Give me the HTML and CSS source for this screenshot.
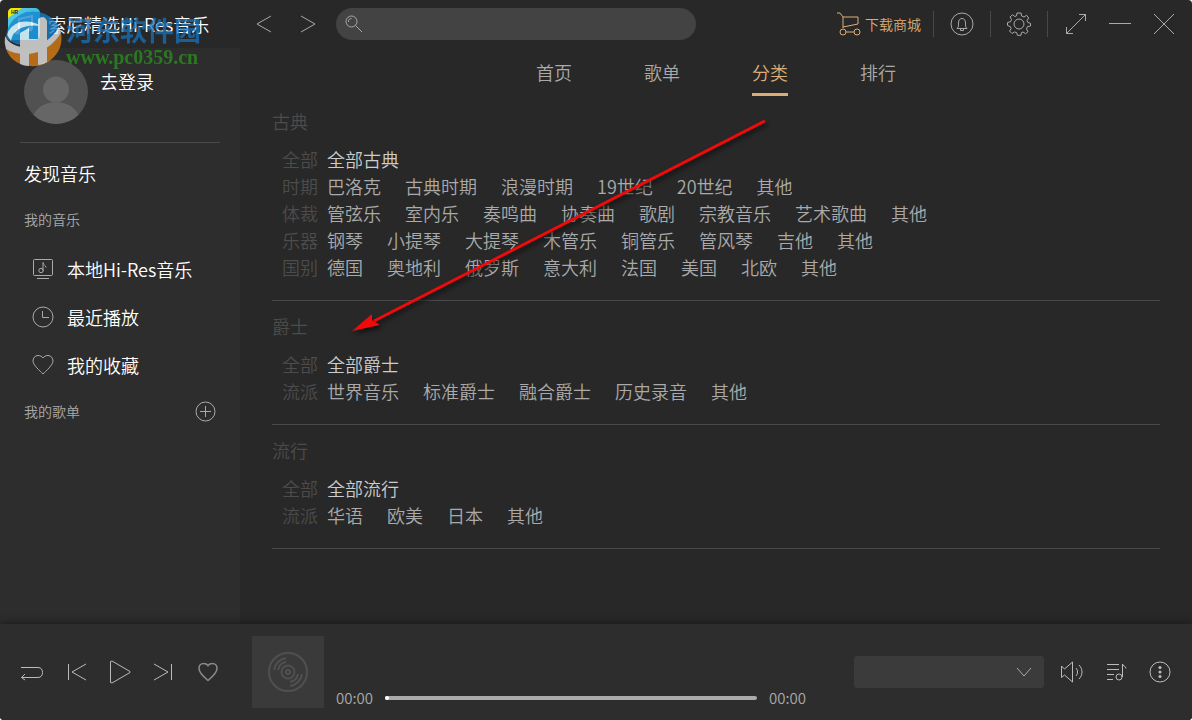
FILE: index.html
```html
<!DOCTYPE html>
<html lang="zh-CN">
<head>
    <meta charset="UTF-8">
    <meta name="viewport" content="width=device-width, initial-scale=1.0">
    <title>索尼精选Hi-Res音乐</title>
    <link rel="stylesheet" href="styles.css">
</head>
<body>
<div class="app">
    <header class="topbar">
        <div class="brand">
            <svg class="brand-logo" viewBox="0 0 32 32">
                <defs>
                    <linearGradient id="logoBg" x1="0" y1="0" x2="1" y2="1">
                        <stop offset="0" stop-color="#5fd0e6"/>
                        <stop offset="1" stop-color="#22a8d8"/>
                    </linearGradient>
                </defs>
                <rect width="32" height="32" rx="5" fill="url(#logoBg)"/>
                <path d="M5 0H14L0 10V5Q0 0 5 0Z" fill="#f7e600"/>
                <path d="M11 24V11L24 8V21" fill="none" stroke="#fff" stroke-width="2"/>
                <circle cx="9" cy="24" r="2.5" fill="#fff"/>
                <circle cx="22" cy="21" r="2.5" fill="#fff"/>
                <text x="3" y="6" class="logo-tag">HR</text>
            </svg>
            <span>索尼精选Hi-Res音乐</span>
        </div>
        <div class="history">
            <button aria-label="后退"><svg viewBox="0 0 20 20"><path d="M17 2L3 10L17 18"/></svg></button>
            <button aria-label="前进"><svg viewBox="0 0 20 20"><path d="M3 2L17 10L3 18"/></svg></button>
        </div>
        <label class="search">
            <svg viewBox="0 0 20 20"><circle cx="7.500" cy="7.500" r="5.500"/><path d="M4.500 8A3 3 0 0 1 7.500 4.500M11.500 11.500L18 18"/></svg>
            <input type="text" aria-label="搜索">
        </label>
        <div class="tools">
            <a href="#" class="store">
                <svg viewBox="0 0 24 24"><path d="M0 1H3L6 5V16M6 5H21V12L6 15M9 20H17"/><circle cx="6" cy="20" r="3"/><circle cx="20" cy="20" r="3"/></svg>
                下载商城
            </a>
            <button class="tool" aria-label="消息"><svg viewBox="0 0 24 24"><circle cx="12" cy="12" r="11"/><path d="M7 16.500H17C15.500 15 15.500 14 15.500 11C15.500 8 14 6.500 12 6.500S8.500 8 8.500 11C8.500 14 8.500 15 7 16.500ZM10.500 17V18.500H13.500V17"/></svg></button>
            <button class="tool" aria-label="设置"><svg viewBox="0 0 24 24"><circle cx="12" cy="12" r="5"/><path d="M10 1H14L14.600 4L17 5L19.600 3.300L21.700 6L20 8.500L20.800 10.500L23.500 11.300V14L20.500 14.600L19.500 17L21 19.600L18.500 21.700L16 20L14.500 20.500L14 23.300H10.500L9.500 20.500L7.500 20L5 21.500L2.500 19L4.200 16.500L3.300 14.500L.5 13.500V10.500L3.500 9.700L4.500 7.500L3 5L5.500 2.700L7.800 4.500L9.500 3.800Z"/></svg></button>
            <button class="tool" aria-label="全屏"><svg viewBox="0 0 24 24"><path d="M2 22L22 2M15 2.500H21.500V9M2.500 15V21.500H9"/></svg></button>
            <button class="window-button" aria-label="最小化"><svg viewBox="0 0 24 24"><path d="M1 11.500H23"/></svg></button>
            <button class="window-button" aria-label="关闭"><svg viewBox="0 0 24 24"><path d="M2 2L22 22M22 2L2 22"/></svg></button>
        </div>
    </header>

    <aside class="sidebar">
        <a href="#" class="profile">
            <svg viewBox="0 0 64 64">
                <clipPath id="avatarClip"><circle cx="32" cy="32" r="32"/></clipPath>
                <g clip-path="url(#avatarClip)">
                    <rect width="64" height="64" fill="#515151"/>
                    <circle cx="32" cy="29.500" r="13" fill="#666"/>
                    <ellipse cx="32" cy="62" rx="24" ry="20" fill="#666"/>
                </g>
            </svg>
            <span>去登录</span>
        </a>
        <a href="#" class="discover">发现音乐</a>
        <h2 class="group-title">我的音乐</h2>
        <nav class="library">
            <a href="#"><svg viewBox="0 0 22 22"><rect x="1.500" y="1.500" width="19" height="16" rx="1"/><path d="M5 20.500H17M11 13V4.500C11 7 14 7 14 9.500"/><circle cx="9" cy="12.500" r="2.200"/></svg>本地Hi-Res音乐</a>
            <a href="#"><svg viewBox="0 0 22 22"><circle cx="11" cy="11" r="10"/><path d="M10.500 5V11.500H17"/></svg>最近播放</a>
            <a href="#"><svg viewBox="0 0 22 22"><path d="M11 20C8 17 1 11 1 7C1 4 3 1.500 6 1.500C8.500 1.500 10 2.500 11 4C12 2.500 13.500 1.500 16 1.500C19 1.500 21 4 21 7C21 11 14 17 11 20Z"/></svg>我的收藏</a>
        </nav>
        <h2 class="group-title">我的歌单
            <button aria-label="新建歌单"><svg viewBox="0 0 21 21"><circle cx="10.500" cy="10.500" r="9.500"/><path d="M10.500 5V16M5 10.500H16"/></svg></button>
        </h2>
    </aside>

    <main class="content">
        <nav class="tabs">
            <a href="#">首页</a>
            <a href="#">歌单</a>
            <a href="#" class="active">分类</a>
            <a href="#">排行</a>
        </nav>

        <section class="genre">
            <h3>古典</h3>
            <dl>
                <dt>全部</dt>
                <dd class="all"><a href="#">全部古典</a></dd>
                <dt>时期</dt>
                <dd><a href="#">巴洛克</a><a href="#">古典时期</a><a href="#">浪漫时期</a><a href="#">19世纪</a><a href="#">20世纪</a><a href="#">其他</a></dd>
                <dt>体裁</dt>
                <dd><a href="#">管弦乐</a><a href="#">室内乐</a><a href="#">奏鸣曲</a><a href="#">协奏曲</a><a href="#">歌剧</a><a href="#">宗教音乐</a><a href="#">艺术歌曲</a><a href="#">其他</a></dd>
                <dt>乐器</dt>
                <dd><a href="#">钢琴</a><a href="#">小提琴</a><a href="#">大提琴</a><a href="#">木管乐</a><a href="#">铜管乐</a><a href="#">管风琴</a><a href="#">吉他</a><a href="#">其他</a></dd>
                <dt>国别</dt>
                <dd><a href="#">德国</a><a href="#">奥地利</a><a href="#">俄罗斯</a><a href="#">意大利</a><a href="#">法国</a><a href="#">美国</a><a href="#">北欧</a><a href="#">其他</a></dd>
            </dl>
        </section>

        <section class="genre">
            <h3>爵士</h3>
            <dl>
                <dt>全部</dt>
                <dd class="all"><a href="#">全部爵士</a></dd>
                <dt>流派</dt>
                <dd><a href="#">世界音乐</a><a href="#">标准爵士</a><a href="#">融合爵士</a><a href="#">历史录音</a><a href="#">其他</a></dd>
            </dl>
        </section>

        <section class="genre">
            <h3>流行</h3>
            <dl>
                <dt>全部</dt>
                <dd class="all"><a href="#">全部流行</a></dd>
                <dt>流派</dt>
                <dd><a href="#">华语</a><a href="#">欧美</a><a href="#">日本</a><a href="#">其他</a></dd>
            </dl>
        </section>
    </main>

    <footer class="player">
        <div class="controls">
            <button aria-label="循环播放"><svg viewBox="0 0 24 24"><path d="M1 7.500H18C21 7.500 22.500 9.500 22.500 12.500S21 17.500 18 17.500H1.500M5 14L1.500 17.500L5 20"/></svg></button>
            <button aria-label="上一首"><svg viewBox="0 0 24 24"><path d="M4.500 4V20M22 4L8 12L22 20"/></svg></button>
            <button aria-label="播放"><svg viewBox="0 0 24 24"><path d="M2.500 1.500L4 1L22 11.500V12.500L4 23L2.500 22.500Z"/></svg></button>
            <button aria-label="下一首"><svg viewBox="0 0 24 24"><path d="M19.500 4V20M2 4L16 12L2 20"/></svg></button>
            <button class="like" aria-label="喜欢"><svg viewBox="0 0 24 24"><path d="M12 20.500C9 18 3 13 3 8.500C3 5.500 5 3.500 7.500 3.500C9.500 3.500 11 4 12 5.500C13 4 14.500 3.500 16.500 3.500C19 3.500 21 5.500 21 8.500C21 13 15 18 12 20.500Z"/></svg></button>
        </div>
        <svg class="cover" viewBox="0 0 72 72">
            <circle cx="36" cy="36" r="19"/>
            <circle cx="36" cy="36" r="6.500"/>
            <circle cx="36" cy="36" r="2"/>
            <path d="M22 34A14 14 0 0 1 34 22M26 34A10 10 0 0 1 34 26M50 38A14 14 0 0 1 38 50M46 38A10 10 0 0 1 38 46"/>
        </svg>
        <div class="progress">
            <span>00:00</span>
            <input type="range" min="0" max="100" value="0" aria-label="播放进度">
            <span>00:00</span>
        </div>
        <div class="quality">
            <select aria-label="音质"><option></option></select>
            <svg viewBox="0 0 16 16"><path d="M1 4L8 12L15 4"/></svg>
        </div>
        <div class="extras">
            <button aria-label="音量"><svg viewBox="0 0 24 24"><path d="M1.500 6V17.500L4.500 15L12.500 22V2L4.500 9ZM16 8C18 10 18 14 16 16M19 5C23 9 23 15 19 19"/></svg></button>
            <button aria-label="播放列表"><svg viewBox="0 0 24 24"><path d="M3 4.500H15M3 9.500H15M3 14.500H10M3 19.500H9M18.500 17V4C18.500 6 22 6 22 8.500"/><circle cx="15" cy="17" r="3"/></svg></button>
            <button aria-label="更多"><svg viewBox="0 0 24 24"><circle cx="12" cy="12" r="10"/><g class="dots"><circle cx="12" cy="7.500" r="1.500"/><circle cx="12" cy="12" r="1.500"/><circle cx="12" cy="16.500" r="1.500"/></g></svg></button>
        </div>
    </footer>

    <!-- site watermark -->
    <div class="watermark">
        <svg viewBox="0 0 58 58">
            <path d="M2 29Q3 10 22 3Q40 0 51 12Q56 18 55 22Q46 36 29 36Q12 38 2 29Z" fill="#1583cd"/>
            <path d="M2 40Q8 44 24 44Q45 42 57 24Q60 42 44 53Q30 61 14 54Q5 49 2 40Z" fill="#e38211"/>
            <path d="M1 27Q7 39 25 38Q44 36 55 18L57 24Q45 43 24 45Q8 45 2 40Q0 34 1 27Z" fill="#f2f2f2"/>
            <path d="M3 26Q5 17 16 13Q28 11 37 17Q24 15 15 20Q8 24 7 32Z" fill="#f2f2f2"/>
            <path d="M16 24L25 19V30H34V10Q40 5 43 12V53Q39 56 34 56V39L25 41V57Q20 57 16 55Z" fill="#f2f2f2"/>
        </svg>
        <div class="watermark-text">
            <strong>河东软件园</strong>
            <span>www.pc0359.cn</span>
        </div>
    </div>

    <!-- pointer arrow -->
    <svg class="pointer" viewBox="0 0 414 214">
        <path d="M413 1L22 201" stroke="#f00b0b" stroke-width="3"/>
        <path d="M0 211L20 194L20 200L28 205Z" fill="#f00b0b"/>
    </svg>
</div>
</body>
</html>
```

FILE: styles.css
```css
* {
    box-sizing: border-box;
}

body {
    margin: 0;
    background: #fff;
    color: #aaa;
    font-family: "Noto Sans CJK SC", sans-serif;
    font-size: 18px;
    font-weight: 350;
    line-height: 27px;
}

a {
    color: inherit;
    text-decoration: none;
}

button {
    display: flex;
    padding: 0;
    border: none;
    background: none;
    color: inherit;
    cursor: pointer;
}

svg {
    display: block;
    flex: none;
    fill: none;
    stroke: currentColor;
    stroke-width: 1;
}

.app {
    position: relative;
    display: grid;
    grid-template-columns: 240px 1fr;
    grid-template-rows: 48px 1fr auto;
    min-height: 100vh;
    background: #282828;
    border-radius: 4px;
    overflow: hidden;
}

/* top bar */
.topbar {
    grid-column: 1 / 3;
    display: flex;
    align-items: center;
}

.brand {
    display: flex;
    align-items: center;
    gap: 8px;
    width: 240px;
    padding-left: 8px;
    color: #fff;
}

.brand-logo {
    width: 32px;
    height: 32px;
    stroke: none;
}

.logo-tag {
    fill: #222;
    font: bold 5px "Liberation Sans", sans-serif;
}

.history {
    display: flex;
    gap: 24px;
    padding: 0 18px 0 14px;
}

.history svg {
    width: 20px;
    height: 20px;
}

.search {
    display: flex;
    align-items: center;
    flex: 0 1 360px;
    height: 32px;
    padding: 0 16px 0 8px;
    border-radius: 16px;
    background: #434343;
}

.search svg {
    width: 20px;
    height: 20px;
}

.search input {
    flex: 1;
    min-width: 0;
    border: none;
    outline: none;
    background: none;
    color: #ddd;
    font: inherit;
    font-size: 14px;
}

.tools {
    display: flex;
    align-items: center;
    margin-left: auto;
    padding-right: 16px;
}

.store {
    display: flex;
    align-items: center;
    gap: 4px;
    padding-right: 12px;
    color: #dcae76;
    font-size: 14px;
}

.tools svg {
    width: 24px;
    height: 24px;
}

.tool {
    padding: 1px 16px;
    border-left: 1px solid #484848;
}

.window-button {
    margin-left: 20px;
}

.tool + .window-button {
    margin-left: 4px;
}

/* sidebar */
.sidebar {
    padding: 12px 20px;
    background: #2d2d2d;
}

.profile {
    display: flex;
    gap: 12px;
    padding: 0 4px 18px;
    border-bottom: 1px solid #4a4a4a;
    color: #fff;
}

.profile svg {
    width: 64px;
    height: 64px;
    stroke: none;
}

.profile span {
    margin-top: 8px;
}

.discover {
    display: block;
    margin-top: 6px;
    padding-left: 4px;
    color: #fff;
    line-height: 48px;
}

.group-title {
    display: flex;
    align-items: center;
    justify-content: space-between;
    height: 44px;
    margin: 0;
    padding: 0 4px;
    font-size: 14px;
    font-weight: 350;
}

.group-title svg {
    width: 21px;
    height: 21px;
}

.library {
    margin-top: 4px;
}

.library a {
    display: flex;
    align-items: center;
    gap: 13px;
    height: 48px;
    padding-left: 12px;
    color: #fff;
}

.library svg {
    width: 22px;
    height: 22px;
    color: #aaa;
}

/* content */
.content {
    padding: 0 32px;
}

.tabs {
    display: flex;
    justify-content: center;
    gap: 72px;
}

.tabs a {
    height: 48px;
    padding-top: 11px;
}

.tabs .active {
    border-bottom: 3px solid #dcae76;
    color: #dcae76;
}

.genre {
    padding: 12px 0 19px;
    border-bottom: 1px solid #4a4a4a;
}

.genre h3 {
    margin: 0 0 11px;
    color: #4c4c4c;
    font-size: 18px;
    font-weight: 350;
}

.genre dl {
    display: grid;
    grid-template-columns: 36px 1fr;
    column-gap: 9px;
    margin: 0;
    padding-left: 10px;
}

.genre dt {
    color: #4c4c4c;
}

.genre dd {
    display: flex;
    flex-wrap: wrap;
    column-gap: 24px;
    margin: 0;
}

.genre .all {
    color: #ccc;
}

/* player */
.player {
    grid-column: 1 / 3;
    display: flex;
    align-items: center;
    padding: 12px 20px;
    background: #2d2d2d;
    box-shadow: 0 0 8px #151515;
}

.controls,
.extras {
    display: flex;
    gap: 20px;
    color: #bbb;
}

.controls svg,
.extras svg {
    width: 24px;
    height: 24px;
}

.controls .like {
    color: #888;
}

.controls .like svg {
    stroke-width: 1.6;
}

.cover {
    width: 72px;
    height: 72px;
    margin: 0 12px 0 32px;
    background: #3a3a3a;
    color: #505050;
    stroke-width: 2;
}

.progress {
    display: flex;
    flex: 1;
    align-items: center;
    align-self: flex-end;
    gap: 12px;
    font-size: 15px;
    line-height: 20px;
}

.progress input {
    flex: 1;
    min-width: 0;
    height: 4px;
    margin: 0;
    border-radius: 2px;
    background: #aaa;
    appearance: none;
}

.progress input::-webkit-slider-thumb {
    width: 4px;
    height: 4px;
    border-radius: 50%;
    background: #fff;
    appearance: none;
}

.quality {
    display: grid;
    align-items: center;
    width: 190px;
    margin: 0 16px 0 48px;
}

.quality select,
.quality svg {
    grid-area: 1 / 1;
}

.quality select {
    width: 100%;
    height: 32px;
    border: none;
    border-radius: 3px;
    background: #3b3b3b;
    color: #aaa;
    appearance: none;
}

.quality svg {
    justify-self: end;
    width: 16px;
    height: 16px;
    margin-right: 12px;
    pointer-events: none;
}

.dots {
    fill: currentColor;
    stroke: none;
}

/* overlays */
.watermark {
    position: absolute;
    top: 9px;
    left: 4px;
    display: flex;
    opacity: 0.75;
    pointer-events: none;
}

.watermark svg {
    width: 58px;
    height: 58px;
    stroke: none;
}

.watermark-text {
    display: flex;
    flex-direction: column;
    padding: 6px 0 0 4px;
}

.watermark strong {
    color: #1673bd;
    font-size: 27px;
    font-weight: 700;
    line-height: 30px;
}

.watermark span {
    color: #2a921d;
    font: bold 20px/24px "Liberation Serif", serif;
}

.pointer {
    position: absolute;
    top: 120px;
    left: 352px;
    width: 414px;
    height: 214px;
    stroke: none;
    filter: drop-shadow(2px 3px 2px #111);
    pointer-events: none;
}
```
